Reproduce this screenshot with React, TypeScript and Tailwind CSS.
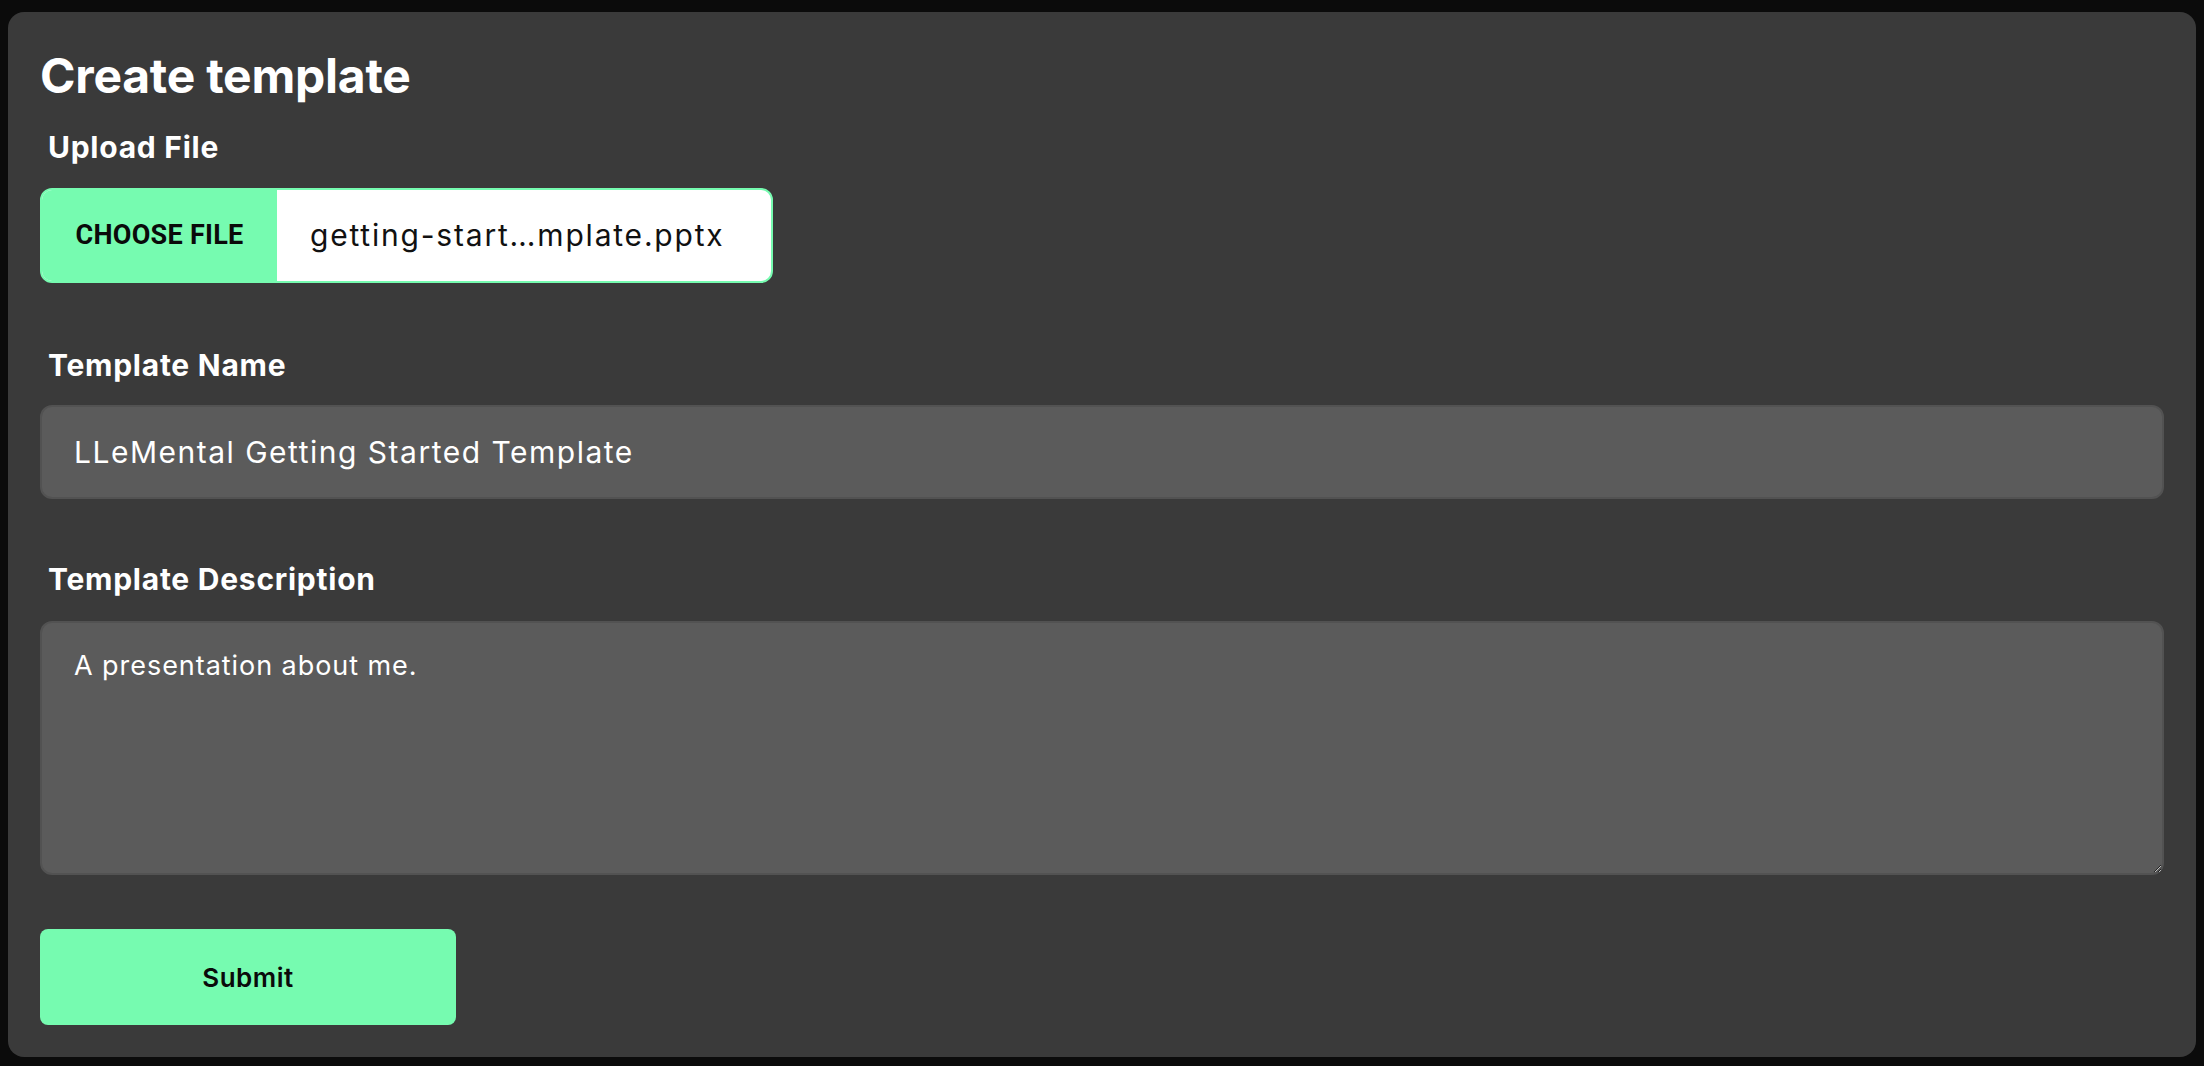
import { useState } from "react";

const GREEN = "bg-[#76fbb0]";

function FieldLabel({ children, className = "" }: { children: string; className?: string }) {
  return (
    <label className={`ml-2 block text-[30px] leading-[28px] font-bold tracking-[0.025em] text-white ${className}`}>
      {children}
    </label>
  );
}

export default function App() {
  const [name, setName] = useState("LLeMental Getting Started Template");
  const [description, setDescription] = useState("A presentation about me.");

  return (
    <div className="min-h-screen bg-[#0b0b0b] px-2 pt-3 pb-[9px] font-['Inter',sans-serif]">
      <form
        className="rounded-2xl bg-[#3a3a3a] px-8 pt-[40px] pb-8"
        onSubmit={(event) => event.preventDefault()}
      >
        <h1 className="text-[48px] leading-[48px] font-bold tracking-[-0.005em] text-white">Create template</h1>

        <FieldLabel className="mt-[33px]">Upload File</FieldLabel>
        <div className="mt-[27px] flex h-[95px] w-[733px] overflow-hidden rounded-xl border-2 border-[#76fbb0] bg-white">
          <div
            className={`flex w-[235px] shrink-0 items-center justify-center ${GREEN} font-['Roboto',sans-serif] text-[27px] font-bold tracking-[0.01em] text-[#0a0a0a]`}
          >
            CHOOSE FILE
          </div>
          <div className="flex items-center pl-[33px] text-[30px] tracking-[0.06em] text-[#111111]">
            getting-start…mplate.pptx
          </div>
        </div>

        <FieldLabel className="mt-[68px]">Template Name</FieldLabel>
        <input
          value={name}
          onChange={(event) => setName(event.target.value)}
          className="mt-[26px] block h-[94px] w-full rounded-xl border-2 border-[#525252] bg-[#5b5b5b] px-8 text-[30px] tracking-[0.05em] text-white outline-none"
        />

        <FieldLabel className="mt-[66px]">Template Description</FieldLabel>
        <textarea
          value={description}
          onChange={(event) => setDescription(event.target.value)}
          className="mt-[28px] block h-[254px] w-full resize-y rounded-xl border-2 border-[#525252] bg-[#5b5b5b] px-8 pt-[23px] text-[27px] leading-[40px] tracking-[0.035em] text-white outline-none"
        />

        <button
          type="submit"
          className={`mt-[54px] block h-[96px] w-[416px] rounded-lg ${GREEN} text-[26px] font-semibold tracking-[0.02em] text-[#0a0a0a]`}
        >
          Submit
        </button>
      </form>
    </div>
  );
}
